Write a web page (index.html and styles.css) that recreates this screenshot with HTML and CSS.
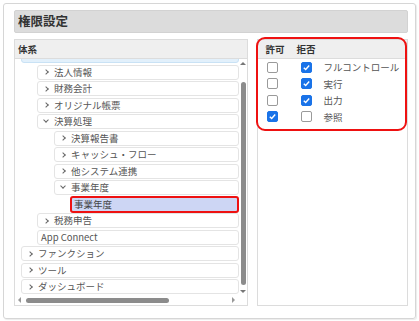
FILE: index.html
```html
<!DOCTYPE html>
<html lang="ja">
<head>
    <meta charset="UTF-8" />
    <title>権限設定</title>
    <link rel="stylesheet" href="styles.css">
</head>
<body>
    <div class="frame">
        <header class="title">権限設定</header>

        <div class="panels">
            <section class="panel tree-panel">
                <div class="panel-head">体系</div>
                <div class="tree-body">
                    <div class="tree-view">
                        <div class="tree-list">
                            <div class="row lv0 selected-parent"></div>
                            <div class="row lv1"><span class="chev"></span>法人情報</div>
                            <div class="row lv1"><span class="chev"></span>財務会計</div>
                            <div class="row lv1"><span class="chev"></span>オリジナル帳票</div>
                            <div class="row lv1"><span class="chev open"></span>決算処理</div>
                            <div class="row lv2"><span class="chev"></span>決算報告書</div>
                            <div class="row lv2"><span class="chev"></span>キャッシュ・フロー</div>
                            <div class="row lv2"><span class="chev"></span>他システム連携</div>
                            <div class="row lv2"><span class="chev open"></span>事業年度</div>
                            <div class="row lv3 leaf active">事業年度</div>
                            <div class="row lv1"><span class="chev"></span>税務申告</div>
                            <div class="row lv1 leaf">App Connect</div>
                            <div class="row lv0"><span class="chev"></span>ファンクション</div>
                            <div class="row lv0"><span class="chev"></span>ツール</div>
                            <div class="row lv0"><span class="chev"></span>ダッシュボード</div>
                        </div>
                    </div>
                    <div class="vscroll">
                        <span class="arrow up"></span>
                        <span class="vthumb"></span>
                        <span class="arrow down"></span>
                    </div>
                </div>
                <div class="hscroll">
                    <span class="arrow left"></span>
                    <span class="hthumb"></span>
                    <span class="arrow right"></span>
                </div>
            </section>

            <section class="panel perm-panel">
                <div class="panel-head perm-head">
                    <span class="col">許可</span>
                    <span class="col">拒否</span>
                </div>
                <div class="perm-row">
                    <span class="col"><span class="cb"></span></span>
                    <span class="col deny"><span class="cb on"></span></span>
                    <span class="label">フルコントロール</span>
                </div>
                <div class="perm-row">
                    <span class="col"><span class="cb"></span></span>
                    <span class="col deny"><span class="cb on"></span></span>
                    <span class="label">実行</span>
                </div>
                <div class="perm-row">
                    <span class="col"><span class="cb"></span></span>
                    <span class="col deny"><span class="cb on"></span></span>
                    <span class="label">出力</span>
                </div>
                <div class="perm-row">
                    <span class="col"><span class="cb on"></span></span>
                    <span class="col deny"><span class="cb"></span></span>
                    <span class="label">参照</span>
                </div>
                <div class="perm-mark"></div>
            </section>
        </div>
    </div>
</body>
</html>
```

FILE: styles.css
```css
* {
    margin: 0;
    padding: 0;
    box-sizing: border-box;
}

body {
    background: #fff;
    font-family: "Noto Sans CJK JP", "Noto Sans", sans-serif;
    color: #555;
}

.frame {
    margin: 3px;
    width: 413px;
    height: 316px;
    border: 1px solid #d6d6d6;
    border-radius: 3px;
    box-shadow: 1px 1px 1px rgba(0, 0, 0, 0.08);
    padding: 6px 7px 0 10px;
}

.title {
    height: 23px;
    background: #dcdcdc;
    border: 1px solid #d2d2d2;
    border-radius: 2px;
    padding-left: 3px;
    font-size: 12.5px;
    font-weight: bold;
    line-height: 20px;
    color: #333;
    margin-bottom: 6px;
}

.panels {
    display: flex;
    gap: 9px;
    height: 267px;
}

.panel {
    border: 1px solid #dcdcdc;
    background: #fff;
    display: flex;
    flex-direction: column;
}

.tree-panel {
    width: 235px;
}

.perm-panel {
    width: 151px;
    position: relative;
}

.panel-head {
    height: 19px;
    flex: none;
    background: #efefef;
    border-bottom: 1px solid #dcdcdc;
    font-size: 9.5px;
    font-weight: bold;
    line-height: 18px;
    color: #333;
    padding-left: 3px;
}

/* tree */
.tree-body {
    flex: 1;
    display: flex;
    min-height: 0;
}

.tree-view {
    flex: 1;
    overflow: hidden;
}

.tree-list {
    margin-top: -11px;
    padding-left: 6px;
}

.row {
    height: 15px;
    margin-bottom: 1.5px;
    border: 1px solid #e4e4e4;
    border-radius: 3px;
    font-size: 9.5px;
    line-height: 13px;
    white-space: nowrap;
    display: flex;
    align-items: center;
    padding-left: 5px;
}

.lv1 { margin-left: 16px; }
.lv2 { margin-left: 33px; }
.lv3 { margin-left: 49px; }

.leaf {
    padding-left: 3px;
}

.selected-parent {
    background: #e2f0fb;
    border-color: #c9e2f5;
}

.active {
    background: #cdd6f4;
    border: 2px solid #ee1111;
    color: #444;
    height: 17px;
    margin-top: -1px;
    margin-bottom: 0.5px;
    padding-left: 2px;
}

.chev {
    width: 4px;
    height: 4px;
    border-right: 1px solid #666;
    border-bottom: 1px solid #666;
    transform: rotate(-45deg);
    margin-right: 6px;
    margin-left: 1px;
}

.chev.open {
    transform: rotate(45deg);
    margin-top: -3px;
}

/* scrollbars */
.vscroll {
    width: 8px;
    flex: none;
    display: flex;
    flex-direction: column;
    align-items: center;
    padding: 3px 0 2px;
}

.vthumb {
    width: 5px;
    flex: 1;
    background: #8c8c8c;
    border-radius: 3px;
    margin: 17px 0 5px;
}

.hscroll {
    height: 10px;
    flex: none;
    display: flex;
    align-items: center;
    padding: 0 12px 0 3px;
}

.hthumb {
    width: 143px;
    height: 5px;
    background: #8c8c8c;
    border-radius: 3px;
    margin-left: 5px;
}

.arrow {
    width: 0;
    height: 0;
    border: 3px solid transparent;
}

.arrow.up { border-bottom-color: #777; border-top-width: 0; }
.arrow.down { border-top-color: #777; border-bottom-width: 0; }
.arrow.left { border-right-color: #999; border-left-width: 0; }
.arrow.right { border-left-color: #999; border-right-width: 0; margin-left: auto; }

/* permissions */
.perm-head {
    display: flex;
    padding-left: 7px;
}

.perm-head .col {
    width: 31px;
}

.perm-row {
    height: 16.5px;
    display: flex;
    align-items: center;
    padding-left: 9px;
    font-size: 9.5px;
    white-space: nowrap;
}

.perm-row:first-of-type {
    margin-top: 2px;
}

.perm-row .col {
    width: 34px;
    flex: none;
    display: flex;
}

.perm-row .col.deny {
    width: 22px;
}

.perm-row .label {
    color: #555;
}

.cb {
    width: 11px;
    height: 11px;
    border: 1px solid #9a9a9a;
    border-radius: 2px;
    background: #fff;
}

.cb.on {
    border-color: #1a73e8;
    background: #1a73e8 url("data:image/svg+xml;utf8,<svg xmlns='http://www.w3.org/2000/svg' viewBox='0 0 10 10'><polyline points='2,5.2 4.1,7.2 8,2.8' fill='none' stroke='white' stroke-width='1.6'/></svg>") center / 9px 9px no-repeat;
}

.perm-mark {
    position: absolute;
    left: -2px;
    top: -3px;
    width: 151px;
    height: 94px;
    border: 2.5px solid #ee1111;
    border-radius: 9px;
    pointer-events: none;
}
```
